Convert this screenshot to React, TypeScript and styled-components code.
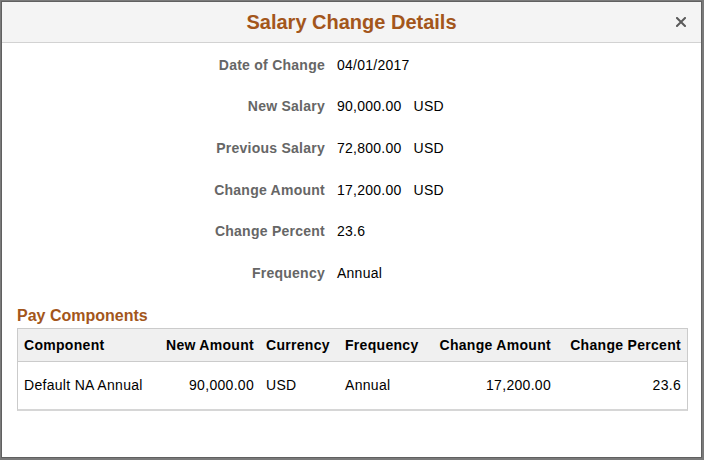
import React from 'react'
import styled, { createGlobalStyle } from 'styled-components'

const GlobalStyle = createGlobalStyle`
    html, body {
        margin: 0;
        padding: 0;
        background: #7a7a7a;
        font-family: "Liberation Sans", Arial, sans-serif;
    }
    * {
        box-sizing: border-box;
    }
`

const Modal = styled.div`
    width: 701px;
    height: 457px;
    margin: 1px 2px 2px 1px;
    border: 1px solid #606060;
    background: #ffffff;
    display: flex;
    flex-direction: column;
`

const Header = styled.div`
    height: 41px;
    flex: none;
    display: grid;
    grid-template-columns: 1fr auto 1fr;
    align-items: center;
    background: #f4f4f4;
    border-bottom: 1px solid #d2d2d2;
`

const Title = styled.h1`
    grid-column: 2;
    margin: 0;
    font-size: 20px;
    font-weight: bold;
    color: #a3561b;
    line-height: 24px;
`

const CloseButton = styled.button`
    grid-column: 3;
    justify-self: end;
    margin-right: 14px;
    width: 12px;
    height: 12px;
    padding: 0;
    border: none;
    background: none;
    display: flex;
    align-items: center;
    justify-content: center;
    cursor: pointer;
`

const Details = styled.div`
    margin-top: 1px;
    display: grid;
    grid-template-columns: 323px auto;
    grid-auto-rows: 41.6px;
    column-gap: 12px;
    align-items: center;
    font-size: 14px;
    letter-spacing: 0.25px;
`

const Label = styled.div`
    text-align: right;
    font-weight: bold;
    color: #666666;
`

const Value = styled.div`
    display: flex;
    gap: 12px;
    color: #000000;
`

const SectionTitle = styled.h2`
    margin: 12px 0 3px 15px;
    font-size: 16px;
    line-height: 19px;
    font-weight: bold;
    color: #a3561b;
`

const Table = styled.table`
    width: 671px;
    margin-left: 15px;
    table-layout: fixed;
    border-collapse: separate;
    border-spacing: 0;
    border: 1px solid #cbcbcb;
    border-bottom: 2px solid #d6d6d6;
    font-size: 14px;
    letter-spacing: 0.3px;
    color: #000000;
`

const Th = styled.th<{ $align?: 'left' | 'right' }>`
    height: 33px;
    padding: 0 6px;
    background: #f0f0f0;
    border-bottom: 1px solid #cbcbcb;
    font-weight: bold;
    text-align: ${({ $align }) => $align || 'left'};
    white-space: nowrap;
`

const Td = styled.td<{ $align?: 'left' | 'right' }>`
    height: 47px;
    padding: 0 6px;
    text-align: ${({ $align }) => $align || 'left'};
    white-space: nowrap;
`

const details: { label: string; value: string; currency?: string }[] = [
    { label: 'Date of Change', value: '04/01/2017' },
    { label: 'New Salary', value: '90,000.00', currency: 'USD' },
    { label: 'Previous Salary', value: '72,800.00', currency: 'USD' },
    { label: 'Change Amount', value: '17,200.00', currency: 'USD' },
    { label: 'Change Percent', value: '23.6' },
    { label: 'Frequency', value: 'Annual' },
]

const columns: { title: string; width: number; align: 'left' | 'right' }[] = [
    { title: 'Component', width: 142, align: 'left' },
    { title: 'New Amount', width: 100, align: 'right' },
    { title: 'Currency', width: 79, align: 'left' },
    { title: 'Frequency', width: 80, align: 'left' },
    { title: 'Change Amount', width: 138, align: 'right' },
    { title: 'Change Percent', width: 130, align: 'right' },
]

const rows = [['Default NA Annual', '90,000.00', 'USD', 'Annual', '17,200.00', '23.6']]

const App = () => {
    return (
        <>
            <GlobalStyle />
            <Modal>
                <Header>
                    <Title>Salary Change Details</Title>
                    <CloseButton aria-label="Close">
                        <svg width="10" height="10" viewBox="0 0 10 10">
                            <path d="M1 1 L9 9 M9 1 L1 9" stroke="#5a5a5a" strokeWidth="2" strokeLinecap="square" />
                        </svg>
                    </CloseButton>
                </Header>
                <Details>
                    {details.map((d) => (
                        <React.Fragment key={d.label}>
                            <Label>{d.label}</Label>
                            <Value>
                                <span>{d.value}</span>
                                {d.currency && <span>{d.currency}</span>}
                            </Value>
                        </React.Fragment>
                    ))}
                </Details>
                <SectionTitle>Pay Components</SectionTitle>
                <Table>
                    <colgroup>
                        {columns.map((c) => (
                            <col key={c.title} style={{ width: c.width }} />
                        ))}
                    </colgroup>
                    <thead>
                        <tr>
                            {columns.map((c) => (
                                <Th key={c.title} $align={c.align}>{c.title}</Th>
                            ))}
                        </tr>
                    </thead>
                    <tbody>
                        {rows.map((r, i) => (
                            <tr key={i}>
                                {r.map((cell, j) => (
                                    <Td key={j} $align={columns[j].align}>{cell}</Td>
                                ))}
                            </tr>
                        ))}
                    </tbody>
                </Table>
            </Modal>
        </>
    )
}

export default App
